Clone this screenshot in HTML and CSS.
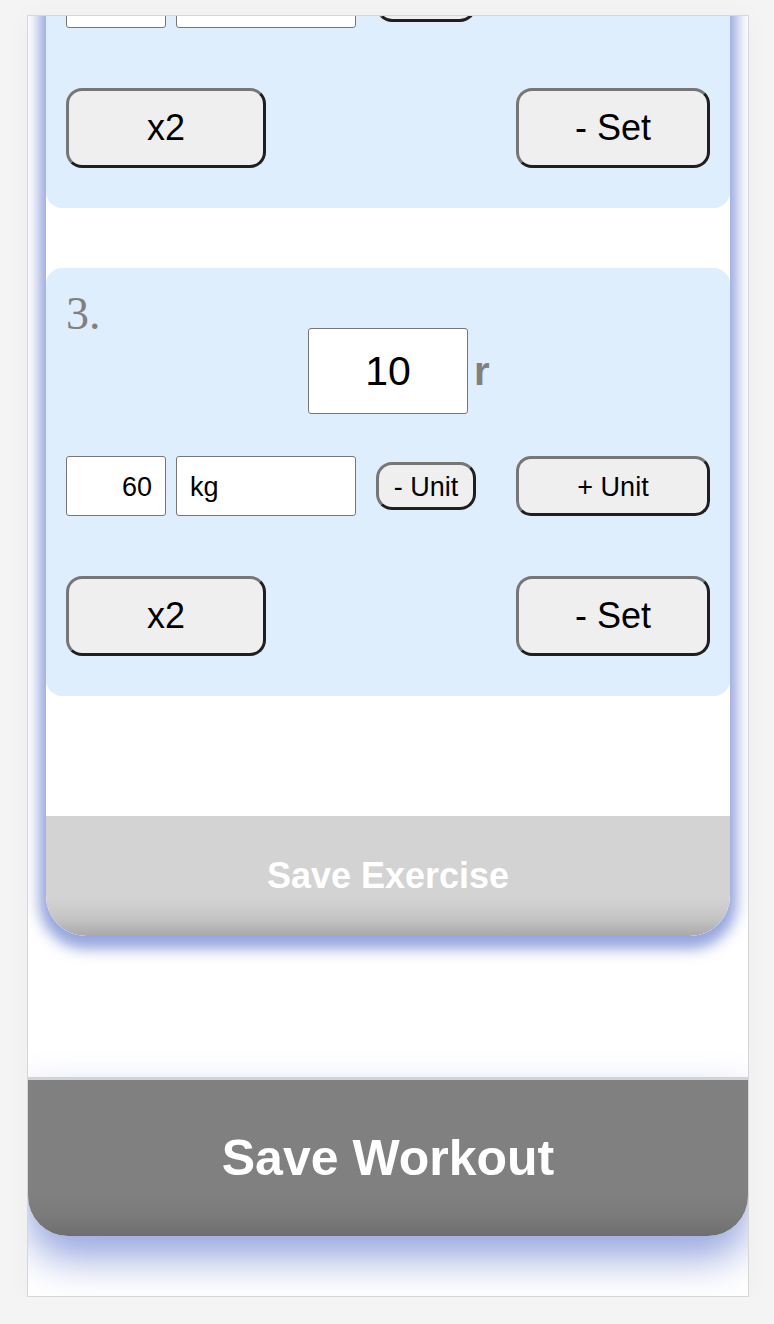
FILE: index.html
```html
<!DOCTYPE html>
<html lang="en">
<head>
<meta charset="utf-8">
<title>Workout</title>
<link rel="stylesheet" href="styles.css">
</head>
<body>
<div class="panel">
  <div class="content">
    <div class="exercise">
      <div class="sets">
        <div class="set">
          <div class="set-head"><span class="set-num">2.</span></div>
          <div class="reps-row">
            <div class="side"></div>
            <input class="reps" type="text" value="10">
            <div class="side"><span class="reps-unit">r</span></div>
          </div>
          <div class="weight-row">
            <div class="weight-group">
              <input class="weight" type="text" value="60">
              <input class="unit" type="text" value="kg">
              <button class="btn btn-small">- Unit</button>
            </div>
            <div class="btn-slot"></div>
          </div>
          <div class="action-row">
            <button class="btn btn-big btn-x2">x2</button>
            <button class="btn btn-big btn-set">- Set</button>
          </div>
        </div>
        <div class="set">
          <div class="set-head"><span class="set-num">3.</span></div>
          <div class="reps-row">
            <div class="side"></div>
            <input class="reps" type="text" value="10">
            <div class="side"><span class="reps-unit">r</span></div>
          </div>
          <div class="weight-row">
            <div class="weight-group">
              <input class="weight" type="text" value="60">
              <input class="unit" type="text" value="kg">
              <button class="btn btn-small">- Unit</button>
            </div>
            <button class="btn btn-mid">+ Unit</button>
          </div>
          <div class="action-row">
            <button class="btn btn-big btn-x2">x2</button>
            <button class="btn btn-big btn-set">- Set</button>
          </div>
        </div>
      </div>
      <div class="exercise-spacer"></div>
      <button class="save-exercise">Save Exercise</button>
    </div>
    <div class="footer-gap"></div>
    <button class="save-workout">Save Workout</button>
  </div>
</div>
</body>
</html>
```

FILE: styles.css
```css
html, body {
  margin: 0;
  padding: 0;
}

body {
  background: #f4f4f4;
  font-family: "Liberation Sans", Arial, sans-serif;
  padding: 15px 0 0 27px;
}

.panel {
  box-sizing: border-box;
  width: 722px;
  height: 1282px;
  border: 1px solid #d6d6d6;
  background: #ffffff;
  overflow: hidden;
  box-shadow: 0 0 24px rgba(0, 0, 0, 0.03);
}

.content {
  margin-top: -236px;
  display: flex;
  flex-direction: column;
}

.exercise {
  margin: 0 18px;
  background: #ffffff;
  border-radius: 0 0 40px 40px;
  box-shadow: 0 6px 14px 7px rgba(80, 105, 200, 0.6);
  overflow: hidden;
  display: flex;
  flex-direction: column;
}

.sets {
  display: flex;
  flex-direction: column;
  gap: 60px;
}

.set {
  background: #dfeefc;
  border-radius: 16px;
  padding: 20px 20px 40px 20px;
  display: flex;
  flex-direction: column;
}

.set-head {
  height: 40px;
}

.set-num {
  font-family: "Liberation Serif", "Times New Roman", serif;
  font-size: 46px;
  line-height: 1.15;
  color: #808080;
  display: block;
}

.reps-row {
  display: flex;
  align-items: baseline;
}

.side {
  flex: 1;
}

.reps {
  box-sizing: border-box;
  width: 160px;
  height: 86px;
  border: 1px solid #767676;
  border-radius: 3px;
  background: #ffffff;
  font-family: "Liberation Sans", Arial, sans-serif;
  font-size: 41px;
  color: #000;
  text-align: center;
  padding: 0;
  outline: none;
}

.reps-unit {
  margin-left: 6px;
  font-size: 40px;
  font-weight: bold;
  color: #808080;
}

.weight-row {
  margin-top: 42px;
  display: flex;
  justify-content: space-between;
  align-items: center;
  height: 60px;
}

.weight-group {
  display: flex;
  align-items: center;
}

.weight,
.unit {
  box-sizing: border-box;
  height: 60px;
  border: 1px solid #767676;
  border-radius: 3px;
  background: #ffffff;
  font-family: "Liberation Sans", Arial, sans-serif;
  font-size: 27px;
  color: #000;
  padding: 2px 13px 0 13px;
  outline: none;
}

.weight {
  width: 100px;
  text-align: right;
}

.unit {
  width: 180px;
  margin-left: 10px;
  text-align: left;
}

.btn {
  box-sizing: border-box;
  font-family: "Liberation Sans", Arial, sans-serif;
  color: #000;
  background: #efefef;
  border-style: solid;
  border-width: 3px;
  border-color: #767676 #1f1f1f #1f1f1f #767676;
  padding: 0;
  cursor: pointer;
}

.btn-small {
  width: 100px;
  height: 48px;
  margin-left: 20px;
  border-radius: 16px;
  font-size: 27px;
  padding-top: 2px;
}

.btn-mid {
  width: 194px;
  height: 60px;
  border-radius: 15px;
  font-size: 27px;
  padding-top: 2px;
}

.btn-slot {
  width: 194px;
  height: 60px;
}

.action-row {
  margin-top: 60px;
  display: flex;
  justify-content: space-between;
}

.btn-big {
  height: 80px;
  border-radius: 16px;
  font-size: 36px;
}

.btn-x2 {
  width: 200px;
}

.btn-set {
  width: 194px;
}

.exercise-spacer {
  height: 120px;
}

.save-exercise {
  height: 120px;
  border: none;
  padding: 0;
  background: linear-gradient(to bottom, #d3d3d3 0%, #d3d3d3 68%, #c4c4c4 86%, #a9a9a9 100%);
  color: #ffffff;
  font-family: "Liberation Sans", Arial, sans-serif;
  font-weight: bold;
  font-size: 36px;
  border-radius: 0 0 40px 40px;
}

.footer-gap {
  height: 141px;
}

.save-workout {
  height: 159px;
  border: none;
  border-top: 3px solid #d3d3d3;
  padding: 0;
  background: linear-gradient(to bottom, #808080 0%, #808080 72%, #7a7a7a 88%, #6e6e6e 100%);
  color: #ffffff;
  font-family: "Liberation Sans", Arial, sans-serif;
  font-weight: bold;
  font-size: 50px;
  border-radius: 0 0 40px 40px;
  box-shadow: 0 22px 40px rgba(80, 105, 200, 0.6);
}
```
